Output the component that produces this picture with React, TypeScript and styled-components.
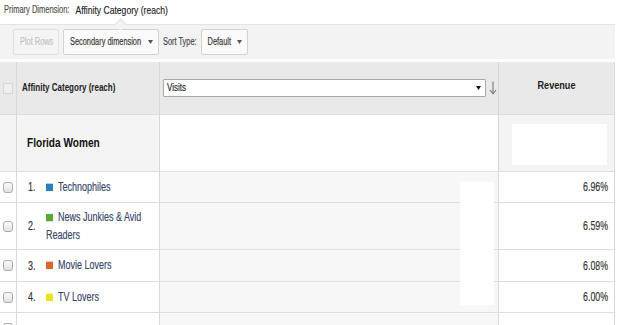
import React from "react";
import styled, { createGlobalStyle, css } from "styled-components";

const Global = createGlobalStyle`
  html, body { margin: 0; padding: 0; background: #fff; }
  body { font-family: "Liberation Sans", Arial, sans-serif; color: #333; }
  * { box-sizing: border-box; }
`;

/* The reference uses a tall, condensed face: a small size stretched vertically */
const condensed = (size: number, sy: number, lh = 12) => css`
  display: inline-block;
  font-size: ${size}px;
  line-height: ${lh}px;
  transform: scaleY(${sy});
  white-space: nowrap;
  -webkit-text-stroke: 0.12px currentColor;
`;

const Page = styled.div`
  width: 620px;
  height: 325px;
  overflow: hidden;
  background: #fff;
`;

const TitleBar = styled.div`
  height: 24px;
  padding: 0 0 4px 4px;
  display: flex;
  align-items: center;
  gap: 6px;
`;

const TitleLabel = styled.span`
  ${condensed(7.5, 1.5)}
  color: #505050;
`;

const TitleValue = styled.span`
  ${condensed(8.6, 1.32)}
  color: #1e1e1e;
`;

const Toolbar = styled.div`
  position: relative;
  width: 615px;
  height: 35px;
  background: #f3f3f3;
  border-top: 1px solid #e4e4e4;
  display: flex;
  align-items: center;
  gap: 4px;
  padding: 0 0 0 13px;
  &::before {
    content: "";
    position: absolute;
    left: 116px;
    top: -5px;
    width: 8px;
    height: 8px;
    background: #f3f3f3;
    border-left: 1px solid #e0e0e0;
    border-top: 1px solid #e0e0e0;
    transform: rotate(45deg);
  }
`;

const Button = styled.div<{ $disabled?: boolean; $w: number }>`
  height: 26px;
  width: ${(p) => p.$w}px;
  flex: none;
  border: 1px solid ${(p) => (p.$disabled ? "#e0e0e0" : "#d2d2d2")};
  border-radius: 2px;
  background: ${(p) => (p.$disabled ? "#f4f4f4" : "#fafafa")};
  color: ${(p) => (p.$disabled ? "#c2c2c2" : "#333")};
  display: flex;
  align-items: center;
  justify-content: space-between;
  padding: 0 5px 0 6px;
`;

const ButtonText = styled.span`
  ${condensed(7.4, 1.55)}
`;

const SortLabel = styled.span`
  ${condensed(7.4, 1.55)}
  color: #444;
`;

const Table = styled.div`
  width: 615px;
  margin-top: 3px;
`;

const Row = styled.div<{ $h: number; $bg?: string }>`
  display: grid;
  grid-template-columns: 17px 143px 339px 116px;
  height: ${(p) => p.$h}px;
  border-bottom: 1px solid #dedede;
  background: ${(p) => p.$bg || "#fff"};
`;

const Cell = styled.div<{ $bg?: string; $align?: string }>`
  display: flex;
  align-items: center;
  justify-content: ${(p) => p.$align || "flex-start"};
  border-right: 1px solid #d8d8d8;
  background: ${(p) => p.$bg || "transparent"};
  min-width: 0;
`;

const CheckCell = styled(Cell)`
  justify-content: flex-start;
  padding-left: 3px;
`;

const Check = styled.span<{ $square?: boolean }>`
  width: 10px;
  height: 11px;
  border: 1px solid ${(p) => (p.$square ? "#d6d6d6" : "#acacac")};
  border-radius: ${(p) => (p.$square ? "0" : "3px")};
  background: ${(p) => (p.$square ? "#efefef" : "linear-gradient(#fbfbfb, #e2e2e2)")};
`;

const HeadCell = styled(Cell)`
  padding-left: 5px;
`;

const HeadText = styled.span`
  ${condensed(8, 1.28)}
  -webkit-text-stroke: 0;
  font-weight: bold;
  color: #222;
`;

const RevenueHead = styled.span`
  ${condensed(9.1, 1.15)}
  -webkit-text-stroke: 0;
  font-weight: bold;
  color: #222;
  margin-top: -4px;
`;

const SelectWrap = styled.div`
  display: flex;
  align-items: center;
  gap: 3px;
  padding-left: 3px;
`;

const Select = styled.div`
  width: 323px;
  height: 18px;
  border: 1px solid #a9a9a9;
  border-radius: 1px;
  background: #fff;
  display: flex;
  align-items: center;
  justify-content: space-between;
  padding: 0 4px 0 3px;
  color: #222;
`;

const SelectText = styled.span`
  ${condensed(8, 1.38)}
`;

const GroupCell = styled(Cell)`
  padding-left: 10px;
`;

const GroupName = styled.span`
  ${condensed(10.1, 1.26)}
  -webkit-text-stroke: 0;
  font-weight: bold;
  color: #111;
`;

const WhiteBox = styled.div`
  width: 95px;
  height: 41px;
  margin-left: 5px;
  margin-top: 2px;
  background: #fff;
`;

const Body = styled.div`
  position: relative;
`;

const Redaction = styled.div`
  position: absolute;
  left: 460px;
  top: 10px;
  width: 34px;
  height: 123px;
  background: #fff;
`;

const DimCell = styled(Cell)`
  padding-left: 11px;
  color: #38476a;
`;

const Num = styled.span`
  ${condensed(9, 1.48)}
  color: #333;
  width: 18px;
  flex: none;
`;

const Label = styled.span`
  display: inline-block;
  font-size: 9px;
  line-height: 11.6px;
  transform: scaleY(1.48);
  width: 100px;
  margin-top: 1px;
  -webkit-text-stroke: 0.12px currentColor;
`;

const Swatch = styled.span<{ $c: string }>`
  display: inline-block;
  width: 7px;
  height: 5.5px;
  background: ${(p) => p.$c};
  margin-right: 5px;
`;

const Value = styled.span`
  ${condensed(8.8, 1.35)}
  color: #333;
  padding-right: 6px;
`;

const Tri = ({ color = "#555" }: { color?: string }) => (
  <svg width="5" height="4" viewBox="0 0 5 4">
    <polygon points="0,0 5,0 2.5,4" fill={color} />
  </svg>
);

const DownArrow = () => (
  <svg width="8" height="16" viewBox="0 0 8 16">
    <line x1="4" y1="1.5" x2="4" y2="13.5" stroke="#808080" strokeWidth="1.2" />
    <polyline points="1,10 4,13.8 7,10" fill="none" stroke="#808080" strokeWidth="1.2" />
  </svg>
);

const rows = [
  { n: 1, name: "Technophiles", color: "#2b80b9", rev: "6.96%", h: 31 },
  { n: 2, name: "News Junkies & Avid Readers", color: "#5ba83a", rev: "6.59%", h: 47 },
  { n: 3, name: "Movie Lovers", color: "#e0612e", rev: "6.08%", h: 32 },
  { n: 4, name: "TV Lovers", color: "#e6e620", rev: "6.00%", h: 31 },
];

export default function App() {
  return (
    <Page>
      <Global />
      <TitleBar>
        <TitleLabel>Primary Dimension:</TitleLabel>
        <TitleValue>Affinity Category (reach)</TitleValue>
      </TitleBar>
      <Toolbar>
        <Button $disabled $w={46}>
          <ButtonText>Plot Rows</ButtonText>
        </Button>
        <Button $w={96}>
          <ButtonText>Secondary dimension</ButtonText>
          <Tri />
        </Button>
        <SortLabel>Sort Type:</SortLabel>
        <Button $w={47}>
          <ButtonText>Default</ButtonText>
          <Tri />
        </Button>
      </Toolbar>
      <Table>
        <Row $h={53} $bg="#e9e9e9">
          <CheckCell>
            <Check $square />
          </CheckCell>
          <HeadCell>
            <HeadText>Affinity Category (reach)</HeadText>
          </HeadCell>
          <Cell>
            <SelectWrap>
              <Select>
                <SelectText>Visits</SelectText>
                <Tri color="#111" />
              </Select>
              <DownArrow />
            </SelectWrap>
          </Cell>
          <Cell $align="center">
            <RevenueHead>Revenue</RevenueHead>
          </Cell>
        </Row>
        <Row $h={57} $bg="#f4f4f4">
          <Cell />
          <GroupCell>
            <GroupName>Florida Women</GroupName>
          </GroupCell>
          <Cell $bg="#fff" />
          <Cell $align="center">
            <WhiteBox />
          </Cell>
        </Row>
        <Body>
          {rows.map((r) => (
            <Row key={r.n} $h={r.h}>
              <CheckCell>
                <Check />
              </CheckCell>
              <DimCell>
                <Num>{r.n}.</Num>
                <Label>
                  <Swatch $c={r.color} />
                  {r.name}
                </Label>
              </DimCell>
              <Cell $bg="#f7f7f7" />
              <Cell $align="flex-end">
                <Value>{r.rev}</Value>
              </Cell>
            </Row>
          ))}
          <Row $h={31}>
            <CheckCell>
              <Check />
            </CheckCell>
            <Cell />
            <Cell $bg="#f7f7f7" />
            <Cell />
          </Row>
          <Redaction />
        </Body>
      </Table>
    </Page>
  );
}
